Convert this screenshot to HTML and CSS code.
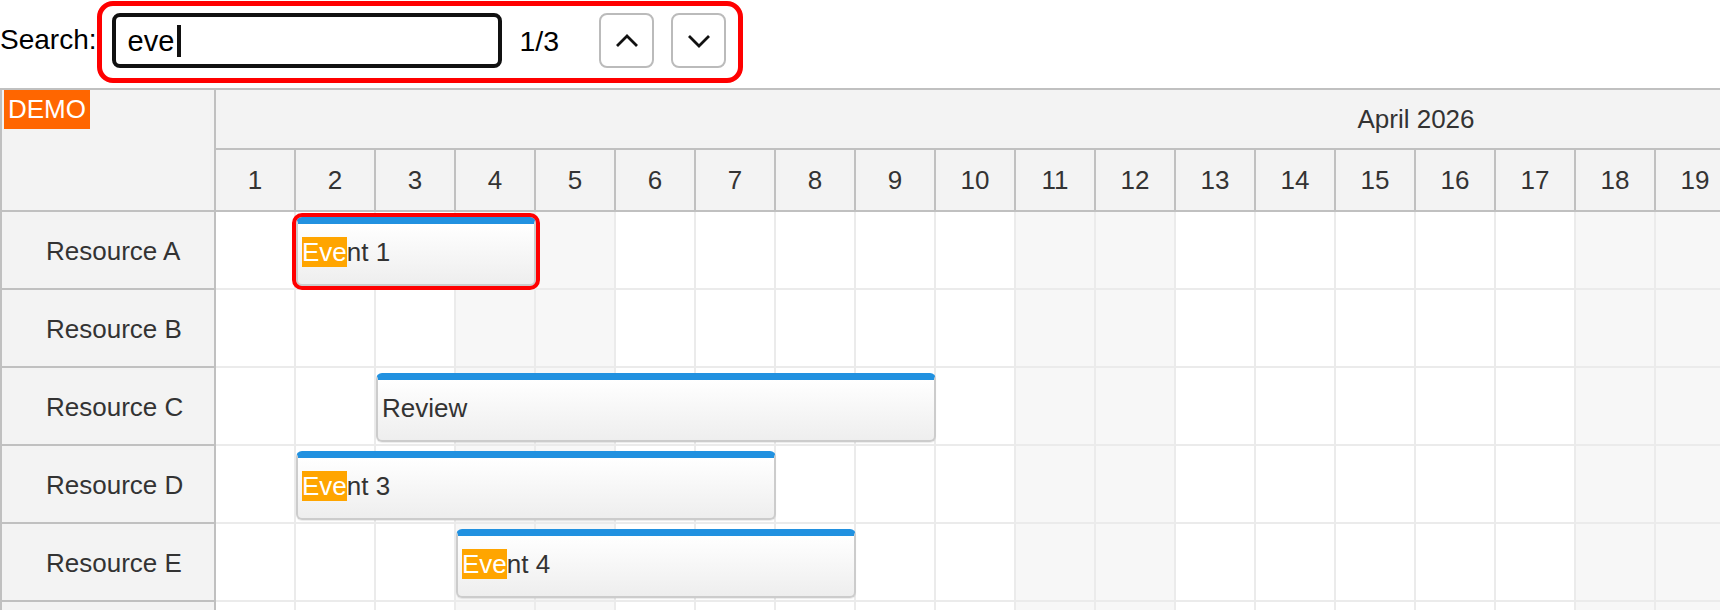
FILE: index.html
```html
<!DOCTYPE html>
<html lang="en">
<head>
  <meta charset="UTF-8">
  <title>Scheduler | Event Search</title>
  <link rel="stylesheet" href="styles.css">
</head>
<body>
  <div class="toolbar">
    <span class="search-label">Search:</span>
    <div class="search-panel">
      <div class="search-input"><span>eve</span><span class="caret"></span></div>
      <span class="counter">1/3</span>
      <button class="nav-btn" title="Previous">
        <svg width="24" height="16" viewBox="0 0 24 16"><polyline points="2,13 12,3 22,13"/></svg>
      </button>
      <button class="nav-btn next" title="Next">
        <svg width="24" height="16" viewBox="0 0 24 16"><polyline points="2,3 12,13 22,3"/></svg>
      </button>
    </div>
  </div>

  <div class="scheduler">
    <div class="corner"><span class="demo">DEMO</span></div>
    <div class="timeheader">
      <div class="month">April 2026</div>
      <div class="days">
        <div class="day">1</div><div class="day">2</div><div class="day">3</div><div class="day">4</div>
        <div class="day">5</div><div class="day">6</div><div class="day">7</div><div class="day">8</div>
        <div class="day">9</div><div class="day">10</div><div class="day">11</div><div class="day">12</div>
        <div class="day">13</div><div class="day">14</div><div class="day">15</div><div class="day">16</div>
        <div class="day">17</div><div class="day">18</div><div class="day">19</div><div class="day">20</div>
        <div class="day">21</div><div class="day">22</div><div class="day">23</div><div class="day">24</div>
        <div class="day">25</div><div class="day">26</div><div class="day">27</div><div class="day">28</div>
        <div class="day">29</div><div class="day">30</div>
      </div>
    </div>

    <div class="row-header">Resource A</div>
    <div class="row">
      <div class="event selected" style="grid-column: 2 / span 3"><span class="hit">Eve</span>nt 1</div>
    </div>

    <div class="row-header">Resource B</div>
    <div class="row"></div>

    <div class="row-header">Resource C</div>
    <div class="row">
      <div class="event" style="grid-column: 3 / span 7">Review</div>
    </div>

    <div class="row-header">Resource D</div>
    <div class="row">
      <div class="event" style="grid-column: 2 / span 6"><span class="hit">Eve</span>nt 3</div>
    </div>

    <div class="row-header">Resource E</div>
    <div class="row">
      <div class="event" style="grid-column: 4 / span 5"><span class="hit">Eve</span>nt 4</div>
    </div>

    <div class="row-header">Resource F</div>
    <div class="row"></div>
  </div>
</body>
</html>
```

FILE: styles.css
```css
html, body {
  margin: 0;
  overflow: hidden;
}
body {
  font-family: "Liberation Sans", Arial, sans-serif;
  color: #000;
  background: #fff;
}

/* search toolbar */
.toolbar {
  display: flex;
  align-items: flex-start;
  height: 88px;
}
.search-label {
  font-size: 28px;
  line-height: 32px;
  margin-top: 24px;
}
.search-panel {
  display: flex;
  align-items: center;
  margin-top: 1px;
  padding: 7px 12px 10px 10px;
  border: 5px solid #ff0000;
  border-radius: 16px;
}
.search-input {
  display: flex;
  align-items: center;
  box-sizing: border-box;
  width: 390px;
  height: 55px;
  padding-left: 12px;
  border: 4px solid #111;
  border-radius: 8px;
  font-size: 29px;
  line-height: 32px;
}
.caret {
  display: inline-block;
  width: 4px;
  height: 32px;
  margin-left: 3px;
  background: #111;
}
.counter {
  font-size: 28.5px;
  line-height: 32px;
  margin: 0 40px 0 18px;
}
.nav-btn {
  display: flex;
  align-items: center;
  justify-content: center;
  box-sizing: border-box;
  width: 55px;
  height: 55px;
  padding: 0;
  background: #fff;
  border: 2px solid #bbb;
  border-radius: 8px;
  cursor: pointer;
}
.nav-btn.next {
  margin-left: 17px;
}
.nav-btn svg polyline {
  fill: none;
  stroke: #111;
  stroke-width: 2.8;
}

/* scheduler */
.scheduler {
  display: grid;
  grid-template-columns: 214px minmax(0, 1fr);
  border-top: 2px solid #c0c0c0;
  border-left: 2px solid #c0c0c0;
  overflow: hidden;
  color: #333;
  font-size: 26px;
}
.corner {
  box-sizing: border-box;
  height: 122px;
  background: #f3f3f3;
  border-right: 2px solid #c0c0c0;
  border-bottom: 2px solid #c0c0c0;
}
.demo {
  display: inline-block;
  margin-left: 2px;
  padding: 4px 4px 5px;
  line-height: 30px;
  background: #ff6600;
  color: #fff;
}
.timeheader {
  width: 2400px;
  background: #f3f3f3;
}
.month {
  box-sizing: border-box;
  height: 60px;
  line-height: 58px;
  text-align: center;
  border-bottom: 2px solid #c0c0c0;
}
.days {
  display: flex;
}
.day {
  display: flex;
  align-items: center;
  justify-content: center;
  box-sizing: border-box;
  flex: 0 0 80px;
  height: 62px;
  border-right: 2px solid #c0c0c0;
  border-bottom: 2px solid #c0c0c0;
}
.row-header {
  display: flex;
  align-items: center;
  box-sizing: border-box;
  height: 78px;
  padding: 3px 0 0 44px;
  background: #f3f3f3;
  border-right: 2px solid #c0c0c0;
  border-bottom: 2px solid #c0c0c0;
}
.row {
  display: grid;
  grid-template-columns: repeat(30, 80px);
  grid-template-rows: 100%;
  box-sizing: border-box;
  width: 2400px;
  height: 78px;
  border-bottom: 2px solid #ebebeb;
  background:
    linear-gradient(to right, transparent 78px, #ebebeb 78px) 0 0 / 80px 100% repeat-x,
    linear-gradient(to right, #fff 240px, #f7f7f7 240px, #f7f7f7 400px, #fff 400px) 0 0 / 560px 100% repeat-x;
}
.event {
  grid-row: 1;
  align-self: start;
  display: flex;
  align-items: center;
  box-sizing: border-box;
  height: 69px;
  margin-top: 5px;
  padding: 0 4px 5px;
  line-height: 30px;
  white-space: nowrap;
  background: linear-gradient(#ffffff, #eeeeee);
  border: 2px solid #cccccc;
  border-top: 7px solid #2191e0;
  border-radius: 6px;
  box-shadow: 0 1px 1px rgba(0, 0, 0, 0.08);
}
.event.selected {
  outline: 4px solid #ff0000;
}
.hit {
  background: #ffa500;
  color: #fff;
}
```
